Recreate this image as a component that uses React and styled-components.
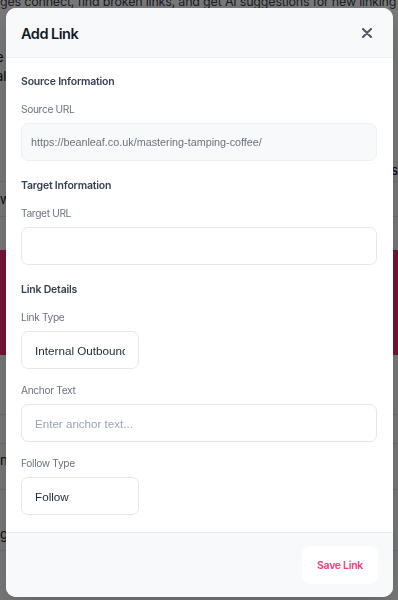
import React from "react";
import styled, { createGlobalStyle } from "styled-components";

const GlobalStyle = createGlobalStyle`
  html, body {
    margin: 0;
    padding: 0;
    background: #ffffff;
    font-family: Inter, "Noto Sans", "Liberation Sans", sans-serif;
  }
  * { box-sizing: border-box; }
`;

const Page = styled.div`
  width: 398px;
  height: 600px;
  overflow: hidden;
  display: flex;
  flex-direction: column;
  background: #ffffff;
  color: #1f2937;
  font-size: 13px;
`;

const Intro = styled.p`
  margin: -8px 0 0 0;
  white-space: nowrap;
  line-height: 20px;
  font-size: 12.5px;
  letter-spacing: -0.2px;
  color: #374151;
`;

const Lead = styled.p`
  margin: 36px 0 0 -4px;
  line-height: 19px;
  white-space: nowrap;
  color: #111827;
`;

const Row = styled.div`
  height: ${(p) => p.$h}px;
  border-bottom: 1px solid #e5e7eb;
  display: flex;
  align-items: ${(p) => p.$align || "center"};
  justify-content: ${(p) => p.$justify || "flex-start"};
  padding: ${(p) => p.$pad || "0"};
  white-space: nowrap;
  color: #111827;
`;

const Banner = styled.div`
  height: 105px;
  margin-top: ${(p) => p.$top}px;
  background: #fb2c74;
`;

const Overlay = styled.div`
  position: fixed;
  inset: 0;
  background: rgba(0, 0, 0, 0.52);
  padding: 8px 0 3px 6px;
  display: flex;
`;

const Modal = styled.div`
  width: 387px;
  background: #ffffff;
  border-radius: 10px;
  overflow: hidden;
  display: flex;
  flex-direction: column;
  box-shadow: 0 10px 30px rgba(0, 0, 0, 0.2);
`;

const Header = styled.div`
  height: 50px;
  flex: none;
  display: flex;
  align-items: center;
  justify-content: space-between;
  padding: 1px 19px 0 15px;
  background: #f8f9fb;
  border-bottom: 1px solid #eef0f3;
`;

const Title = styled.h2`
  margin: 0;
  font-size: 14.5px;
  font-weight: 600;
  color: #111827;
  letter-spacing: -0.5px;
`;

const CloseButton = styled.button`
  border: none;
  background: transparent;
  padding: 0;
  width: 14px;
  height: 14px;
  display: flex;
  align-items: center;
  justify-content: center;
  color: #4b5563;
  cursor: pointer;
`;

const Body = styled.div`
  flex: 1;
  padding: 16px 16px 16px 15px;
  display: flex;
  flex-direction: column;
  gap: 17px;
`;

const Section = styled.section`
  display: flex;
  flex-direction: column;
  gap: 14px;
`;

const SectionTitle = styled.h3`
  margin: 0 0 -2px;
  font-size: 10.5px;
  line-height: 16px;
  font-weight: 600;
  letter-spacing: -0.2px;
  color: #374151;
`;

const Field = styled.div`
  display: flex;
  flex-direction: column;
  gap: 7px;
`;

const Label = styled.label`
  font-size: 10.2px;
  line-height: 14px;
  letter-spacing: -0.35px;
  color: #6b7280;
`;

const Input = styled.input`
  height: 38px;
  width: 100%;
  border: 1px solid ${(p) => (p.readOnly ? "#eef0f3" : "#e3e8ef")};
  border-radius: 7px;
  background: ${(p) => (p.readOnly ? "#f8f9fb" : "#ffffff")};
  padding: 0 ${(p) => (p.readOnly ? "9px" : "13px")};
  font-family: "Liberation Sans", Arial, sans-serif;
  font-size: ${(p) => (p.readOnly ? "10.8px" : "11.6px")};
  color: ${(p) => (p.readOnly ? "#6b7280" : "#1f2937")};
  outline: none;
  &::placeholder {
    color: #9ca3af;
  }
`;

const Select = styled.select`
  appearance: none;
  -webkit-appearance: none;
  height: 38px;
  width: 118px;
  border: 1px solid #e3e8ef;
  border-radius: 7px;
  background: #ffffff;
  padding: 0 13px;
  font-family: "Liberation Sans", Arial, sans-serif;
  font-size: 11.7px;
  color: #1f2937;
  outline: none;
`;

const Footer = styled.div`
  height: 65px;
  flex: none;
  background: #f8f9fb;
  border-top: 1px solid #e8ebef;
  display: flex;
  align-items: flex-start;
  justify-content: flex-end;
  padding: 13px 15px 0;
`;

const SaveButton = styled.button`
  height: 38px;
  width: 76px;
  border: none;
  border-radius: 8px;
  background: #ffffff;
  color: #f0407e;
  font-family: inherit;
  font-size: 10.5px;
  font-weight: 600;
  letter-spacing: -0.3px;
  cursor: pointer;
`;

export default function App() {
  return (
    <>
      <GlobalStyle />
      <Page>
        <Intro>
          ges connect, find broken links, and get AI suggestions for new linking opportunities.
        </Intro>
        <Lead>
          e internal link map for this page shows c
          <br />
          al outbound and inbound links
        </Lead>
        <Row $h={96} $align="flex-end" $justify="flex-end" $pad="0 0 3px">
          <span>s</span>
        </Row>
        <Row $h={35}>
          <span>w</span>
        </Row>
        <Banner $top={33} />
        <Row $h={60} />
        <Row $h={29} />
        <Row $h={46} $align="flex-start" $pad="8px 0 0">
          <span>n</span>
        </Row>
        <Row $h={61} $align="flex-end" $pad="0 0 8px">
          <span>g</span>
        </Row>
      </Page>
      <Overlay>
        <Modal>
          <Header>
            <Title>Add Link</Title>
            <CloseButton aria-label="Close">
              <svg width="10" height="10" viewBox="0 0 10 10" fill="none">
                <path
                  d="M1 1L9 9M9 1L1 9"
                  stroke="currentColor"
                  strokeWidth="2"
                  strokeLinecap="round"
                />
              </svg>
            </CloseButton>
          </Header>
          <Body>
            <Section>
              <SectionTitle>Source Information</SectionTitle>
              <Field>
                <Label>Source URL</Label>
                <Input
                  readOnly
                  value="https://beanleaf.co.uk/mastering-tamping-coffee/"
                />
              </Field>
            </Section>
            <Section>
              <SectionTitle>Target Information</SectionTitle>
              <Field>
                <Label>Target URL</Label>
                <Input defaultValue="" />
              </Field>
            </Section>
            <Section>
              <SectionTitle>Link Details</SectionTitle>
              <Field>
                <Label>Link Type</Label>
                <Select defaultValue="internal">
                  <option value="internal">Internal Outbound</option>
                  <option value="external">External Outbound</option>
                </Select>
              </Field>
              <Field>
                <Label>Anchor Text</Label>
                <Input placeholder="Enter anchor text..." />
              </Field>
              <Field>
                <Label>Follow Type</Label>
                <Select defaultValue="follow">
                  <option value="follow">Follow</option>
                  <option value="nofollow">Nofollow</option>
                </Select>
              </Field>
            </Section>
          </Body>
          <Footer>
            <SaveButton>Save Link</SaveButton>
          </Footer>
        </Modal>
      </Overlay>
    </>
  );
}
